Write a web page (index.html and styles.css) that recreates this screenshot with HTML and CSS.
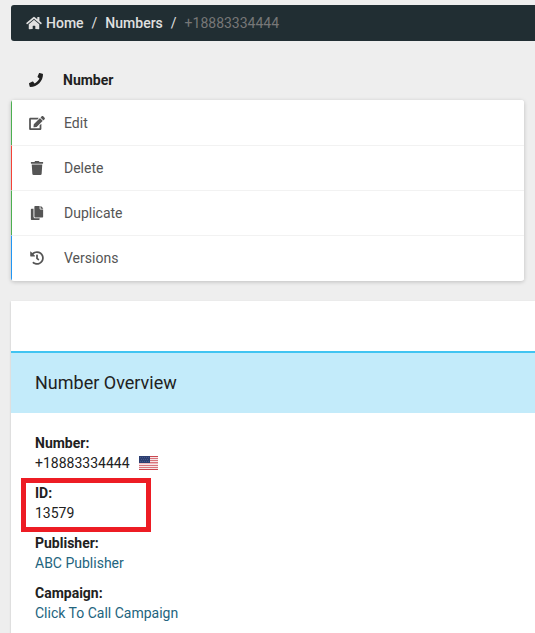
FILE: index.html
```html
<!DOCTYPE html>
<html lang="en">
<head>
    <meta charset="UTF-8">
    <meta name="viewport" content="width=device-width, initial-scale=1.0">
    <title>Number Overview</title>
    <link rel="stylesheet" href="styles.css">
</head>
<body>
    <nav class="breadcrumb" aria-label="Breadcrumb">
        <a href="#home"><svg class="icon-home" viewBox="0 0 576 512" aria-hidden="true"><path d="M280.37 148.26L96 300.11V464a16 16 0 0 0 16 16l112.06-.29a16 16 0 0 0 15.92-16V368a16 16 0 0 1 16-16h64a16 16 0 0 1 16 16v95.64a16 16 0 0 0 16 16.05L464 480a16 16 0 0 0 16-16V300L295.67 148.26a12.19 12.19 0 0 0-15.3 0zM571.6 251.47L488 182.56V44.05a12 12 0 0 0-12-12h-56a12 12 0 0 0-12 12v72.61L318.47 43a48 48 0 0 0-61 0L4.34 251.47a12 12 0 0 0-1.6 16.9l25.5 31A12 12 0 0 0 45.15 301l235.22-193.74a12.19 12.19 0 0 1 15.3 0L530.9 301a12 12 0 0 0 16.9-1.6l25.5-31a12 12 0 0 0-1.7-16.93z"/></svg>Home</a>
        <span class="separator">/</span>
        <a href="#numbers">Numbers</a>
        <span class="separator">/</span>
        <span class="current">+18883334444</span>
    </nav>

    <section class="actions">
        <h2 class="actions-title">
            <svg class="icon" viewBox="0 0 512 512" aria-hidden="true"><path d="M493.4 24.6l-104-24c-11.3-2.6-22.9 3.3-27.5 13.9l-48 112c-4.2 9.8-1.4 21.3 6.9 28l60.6 49.6c-36 76.7-98.9 140.5-177.2 177.2l-49.6-60.6c-6.8-8.3-18.2-11.1-28-6.9l-112 48C3.9 366.5-2 378.1.6 389.4l24 104C27.1 504.2 36.7 512 48 512c256.1 0 464-207.5 464-464 0-11.2-7.7-20.9-18.6-23.4z"/></svg>
            Number
        </h2>
        <div class="menu">
            <button type="button" class="menu-item green">
                <svg class="icon" viewBox="0 0 576 512" aria-hidden="true"><path d="M402.6 83.2l90.2 90.2c3.8 3.8 3.8 10 0 13.8L274.4 405.6l-92.8 10.3c-12.4 1.4-22.9-9.1-21.5-21.5l10.3-92.8L388.8 83.2c3.8-3.8 10-3.8 13.8 0zm162-22.9l-48.8-48.8c-15.2-15.2-39.9-15.2-55.2 0l-35.4 35.4c-3.8 3.8-3.8 10 0 13.8l90.2 90.2c3.8 3.8 10 3.8 13.8 0l35.4-35.4c15.2-15.3 15.2-40 0-55.2zM384 346.2V448H64V128h229.8c3.2 0 6.2-1.3 8.5-3.5l40-40c7.6-7.6 2.2-20.5-8.5-20.5H48C21.5 64 0 85.5 0 112v352c0 26.5 21.5 48 48 48h352c26.5 0 48-21.5 48-48V306.2c0-10.7-12.9-16-20.5-8.5l-40 40c-2.2 2.3-3.5 5.3-3.5 8.5z"/></svg>
                Edit
            </button>
            <button type="button" class="menu-item red">
                <svg class="icon" viewBox="0 0 448 512" aria-hidden="true"><path d="M432 32H312l-9.4-18.7A24 24 0 0 0 281.1 0H166.8a23.72 23.72 0 0 0-21.4 13.3L136 32H16A16 16 0 0 0 0 48v32a16 16 0 0 0 16 16h416a16 16 0 0 0 16-16V48a16 16 0 0 0-16-16zM53.2 467a48 48 0 0 0 47.9 45h245.8a48 48 0 0 0 47.9-45L416 128H32z"/></svg>
                Delete
            </button>
            <button type="button" class="menu-item green">
                <svg class="icon" viewBox="0 0 448 512" aria-hidden="true"><path d="M320 448v40c0 13.255-10.745 24-24 24H24c-13.255 0-24-10.745-24-24V120c0-13.255 10.745-24 24-24h72v296c0 30.879 25.121 56 56 56h168zm0-344V0H152c-13.255 0-24 10.745-24 24v368c0 13.255 10.745 24 24 24h272c13.255 0 24-10.745 24-24V128H344c-13.2 0-24-10.8-24-24zm120.971-31.029L375.029 7.029A24 24 0 0 0 358.059 0H352v96h96v-6.059a24 24 0 0 0-7.029-16.97z"/></svg>
                Duplicate
            </button>
            <button type="button" class="menu-item blue">
                <svg class="icon" viewBox="0 0 512 512" aria-hidden="true"><path d="M504 255.531c.253 136.64-111.18 248.372-247.82 248.468-59.015.042-113.223-20.53-155.822-54.911-11.077-8.94-11.905-25.541-1.839-35.607l11.267-11.267c8.609-8.609 22.353-9.551 31.891-1.984C173.062 425.135 212.781 440 256 440c101.705 0 184-82.311 184-184 0-101.705-82.311-184-184-184-48.814 0-93.149 18.969-126.068 49.932l50.754 50.754c10.08 10.08 2.941 27.314-11.313 27.314H24c-8.837 0-16-7.163-16-16V38.627c0-14.254 17.234-21.393 27.314-11.314l49.372 49.372C129.209 34.136 189.552 8 256 8c136.81 0 247.747 110.78 248 247.531zm-180.912 78.784l9.823-12.63c8.138-10.463 6.253-25.542-4.21-33.679L288 256.349V152c0-13.255-10.745-24-24-24h-16c-13.255 0-24 10.745-24 24v135.651l65.409 50.874c10.463 8.137 25.541 6.253 33.679-4.21z"/></svg>
                Versions
            </button>
        </div>
    </section>

    <main class="overview">
        <h1 class="overview-title">Number Overview</h1>
        <dl class="details">
            <div class="field">
                <dt>Number:</dt>
                <dd>+18883334444
                    <svg class="flag" viewBox="0 0 19 14" role="img" aria-label="United States">
                        <path fill="#f6e6e8" d="M0 0h19v14H0z"/>
                        <path fill="#c9474f" d="M0 0h19v1H0zM0 13h19v1H0z"/>
                        <path fill="#d9747c" d="M0 2h19v1H0zM0 4h19v1H0zM0 6h19v1H0zM0 9h19v1H0zM0 11h19v1H0z"/>
                        <path fill="#f0b9bd" d="M0 7h19v1H0z"/>
                        <path fill="#2c3e71" d="M0 0h11v7H0z"/>
                        <path fill="#465788" d="M1 1h1v1H1zM3 1h1v1H3zM5 1h1v1H5zM7 1h1v1H7zM9 1h1v1H9zM2 3h1v1H2zM4 3h1v1H4zM6 3h1v1H6zM8 3h1v1H8zM1 5h1v1H1zM3 5h1v1H3zM5 5h1v1H5zM7 5h1v1H7zM9 5h1v1H9z"/>
                    </svg>
                </dd>
            </div>
            <div class="field highlight">
                <dt>ID:</dt>
                <dd>13579</dd>
            </div>
            <div class="field">
                <dt>Publisher:</dt>
                <dd><a href="#publisher">ABC Publisher</a></dd>
            </div>
            <div class="field">
                <dt>Campaign:</dt>
                <dd><a href="#campaign">Click To Call Campaign</a></dd>
            </div>
        </dl>
    </main>
</body>
</html>
```
FILE: styles.css
```css
*,
*::after {
    box-sizing: border-box;
}
body {
    margin: 0;
    padding: 5px 0 0 11px;
    background: #eee;
    color: #212121;
    font-family: Roboto, sans-serif;
    font-size: 14px;
    line-height: 20px;
}
a {
    color: #23647e;
    text-decoration: none;
}
.breadcrumb {
    display: flex;
    align-items: center;
    gap: 8px;
    padding: 8px 15px;
    background: #212e33;
    border-radius: 3px 0 0 3px;
    color: #e0e0e0;
}
.breadcrumb a {
    display: flex;
    align-items: center;
    gap: 4px;
    color: #e0e0e0;
    font-weight: 500;
}
.breadcrumb .current {
    color: #777;
}
.icon-home {
    width: 16px;
    height: 14px;
    fill: currentColor;
}
.actions {
    margin-right: 11px;
}
.actions-title {
    display: flex;
    align-items: center;
    gap: 19px;
    height: 59px;
    margin: 0;
    padding: 19px 17px 0;
    font-size: 14px;
    font-weight: 700;
    line-height: 20px;
}
.icon {
    width: 16px;
    height: 14px;
    fill: currentColor;
}
.menu {
    padding-bottom: 1px;
    background: #fff;
    border-radius: 3px;
    box-shadow: 0 1px 4px rgba(0, 0, 0, 0.2);
    overflow: hidden;
}
.menu-item {
    display: flex;
    align-items: center;
    gap: 19px;
    width: 100%;
    padding: 13px 17px 12px;
    border: 0;
    border-left: 1px solid;
    background: #fff;
    color: #555;
    font: inherit;
    cursor: pointer;
}
.menu-item + .menu-item {
    border-top: 1px solid #f2f2f2;
    padding-top: 12px;
}
.menu-item.green { border-left-color: #4caf50; }
.menu-item.red { border-left-color: #f44336; }
.menu-item.blue { border-left-color: #2196f3; }
.overview {
    margin-top: 20px;
    padding-top: 50px;
    background: #fff;
    box-shadow: 0 1px 2px rgba(0, 0, 0, 0.2);
}
.overview-title {
    margin: 0;
    padding: 20px 24px;
    border-top: 2px solid #41c4f1;
    background: #c3ebfa;
    font-size: 18px;
    font-weight: 400;
    line-height: 20px;
}
.details {
    display: flex;
    flex-direction: column;
    gap: 10px;
    margin: 0;
    padding: 20px 24px;
}
.field dt {
    font-weight: 700;
}
.field dd {
    display: flex;
    align-items: center;
    gap: 9px;
    margin: 0;
}
.flag {
    width: 19px;
    height: 14px;
}
.highlight {
    position: relative;
}
.highlight::after {
    content: "";
    position: absolute;
    top: -5px;
    left: -14px;
    width: 130px;
    height: 54px;
    border: 5px solid #ed1c24;
}
```
